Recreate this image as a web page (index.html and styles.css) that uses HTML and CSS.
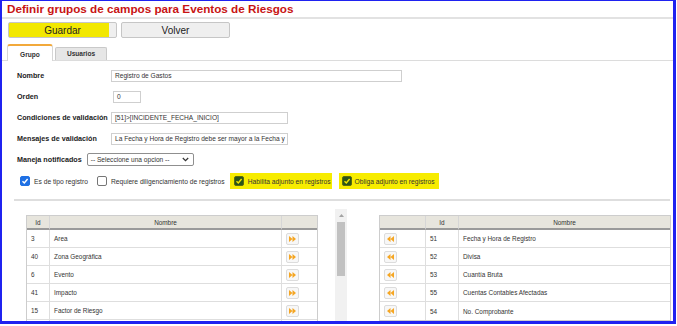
FILE: index.html
```html
<!DOCTYPE html>
<html lang="es">
<head>
    <meta charset="UTF-8">
    <title>Definir grupos de campos</title>
    <link rel="stylesheet" href="styles.css">
</head>
<body>
<div class="frame">
    <h1 class="page-title">Definir grupos de campos para Eventos de Riesgos</h1>

    <div class="toolbar">
        <button class="btn btn-save">Guardar</button>
        <button class="btn">Volver</button>
    </div>

    <div class="tabs">
        <div class="tab active">Grupo</div>
        <div class="tab">Usuarios</div>
    </div>

    <div class="form">
        <div class="row">
            <label class="lbl">Nombre</label>
            <div class="field w-nombre">Registro de Gastos</div>
        </div>
        <div class="row">
            <label class="lbl">Orden</label>
            <div class="field w-orden">0</div>
        </div>
        <div class="row">
            <label class="lbl">Condiciones de validación</label>
            <div class="field w-long">[51]&gt;[INCIDENTE_FECHA_INICIO]</div>
        </div>
        <div class="row">
            <label class="lbl">Mensajes de validación</label>
            <div class="field w-long">La Fecha y Hora de Registro debe ser mayor a la Fecha y</div>
        </div>
        <div class="row">
            <label class="lbl lbl-auto">Maneja notificados</label>
            <div class="select">
                <span>-- Seleccione una opcion --</span>
                <svg width="7" height="5" viewBox="0 0 7 5"><path d="M0.8 1 L3.5 3.7 L6.2 1" fill="none" stroke="#333" stroke-width="1.2"/></svg>
            </div>
        </div>

        <div class="checks">
            <div class="check c1">
                <span class="box on"><svg width="8" height="8" viewBox="0 0 8 8"><path d="M1.5 4.2 L3.3 6 L6.6 2" fill="none" stroke="#fff" stroke-width="1.4"/></svg></span>
                Es de tipo registro
            </div>
            <div class="check c2">
                <span class="box"></span>
                Requiere diligenciamiento de registros
            </div>
            <div class="check mark c3">
                <span class="box hl"><svg width="8" height="8" viewBox="0 0 8 8"><path d="M1.5 4.2 L3.3 6 L6.6 2" fill="none" stroke="#f2e600" stroke-width="1.4"/></svg></span>
                Habilita adjunto en registros
            </div>
            <div class="check mark c4">
                <span class="box hl"><svg width="8" height="8" viewBox="0 0 8 8"><path d="M1.5 4.2 L3.3 6 L6.6 2" fill="none" stroke="#f2e600" stroke-width="1.4"/></svg></span>
                Obliga adjunto en registros
            </div>
        </div>
    </div>

    <div class="divider"></div>

    <div class="lists">
        <table class="grid">
            <colgroup><col class="c-id"><col class="c-name"><col class="c-btn"></colgroup>
            <thead>
                <tr><th>Id</th><th>Nombre</th><th></th></tr>
            </thead>
            <tbody>
                <tr><td>3</td><td>Area</td><td><span class="mv"><svg width="7" height="6" viewBox="0 0 7 6"><path d="M0 0 L3.5 3 L0 6 Z M3.5 0 L7 3 L3.5 6 Z" fill="#f5a623"/></svg></span></td></tr>
                <tr><td>40</td><td>Zona Geográfica</td><td><span class="mv"><svg width="7" height="6" viewBox="0 0 7 6"><path d="M0 0 L3.5 3 L0 6 Z M3.5 0 L7 3 L3.5 6 Z" fill="#f5a623"/></svg></span></td></tr>
                <tr><td>6</td><td>Evento</td><td><span class="mv"><svg width="7" height="6" viewBox="0 0 7 6"><path d="M0 0 L3.5 3 L0 6 Z M3.5 0 L7 3 L3.5 6 Z" fill="#f5a623"/></svg></span></td></tr>
                <tr><td>41</td><td>Impacto</td><td><span class="mv"><svg width="7" height="6" viewBox="0 0 7 6"><path d="M0 0 L3.5 3 L0 6 Z M3.5 0 L7 3 L3.5 6 Z" fill="#f5a623"/></svg></span></td></tr>
                <tr><td>15</td><td>Factor de Riesgo</td><td><span class="mv"><svg width="7" height="6" viewBox="0 0 7 6"><path d="M0 0 L3.5 3 L0 6 Z M3.5 0 L7 3 L3.5 6 Z" fill="#f5a623"/></svg></span></td></tr>
                <tr class="cut"><td></td><td></td><td><span class="mv"><svg width="7" height="6" viewBox="0 0 7 6"><path d="M0 0 L3.5 3 L0 6 Z M3.5 0 L7 3 L3.5 6 Z" fill="#f5a623"/></svg></span></td></tr>
            </tbody>
        </table>

        <div class="scroll">
            <svg class="scroll-up" width="5" height="3" viewBox="0 0 5 3"><path d="M0 3 L2.5 0 L5 3 Z" fill="#a3a3a3"/></svg>
            <div class="thumb"></div>
        </div>

        <table class="grid right">
            <colgroup><col class="c-btn2"><col class="c-id2"><col class="c-name2"></colgroup>
            <thead>
                <tr><th></th><th>Id</th><th>Nombre</th></tr>
            </thead>
            <tbody>
                <tr><td><span class="mv"><svg width="7" height="6" viewBox="0 0 7 6"><path d="M7 0 L3.5 3 L7 6 Z M3.5 0 L0 3 L3.5 6 Z" fill="#f5a623"/></svg></span></td><td>51</td><td>Fecha y Hora de Registro</td></tr>
                <tr><td><span class="mv"><svg width="7" height="6" viewBox="0 0 7 6"><path d="M7 0 L3.5 3 L7 6 Z M3.5 0 L0 3 L3.5 6 Z" fill="#f5a623"/></svg></span></td><td>52</td><td>Divisa</td></tr>
                <tr><td><span class="mv"><svg width="7" height="6" viewBox="0 0 7 6"><path d="M7 0 L3.5 3 L7 6 Z M3.5 0 L0 3 L3.5 6 Z" fill="#f5a623"/></svg></span></td><td>53</td><td>Cuantía Bruta</td></tr>
                <tr><td><span class="mv"><svg width="7" height="6" viewBox="0 0 7 6"><path d="M7 0 L3.5 3 L7 6 Z M3.5 0 L0 3 L3.5 6 Z" fill="#f5a623"/></svg></span></td><td>55</td><td>Cuentas Contables Afectadas</td></tr>
                <tr><td><span class="mv"><svg width="7" height="6" viewBox="0 0 7 6"><path d="M7 0 L3.5 3 L7 6 Z M3.5 0 L0 3 L3.5 6 Z" fill="#f5a623"/></svg></span></td><td>54</td><td>No. Comprobante</td></tr>
            </tbody>
        </table>
    </div>
</div>
</body>
</html>
```

FILE: styles.css
```css
* {
    box-sizing: border-box;
}

body {
    margin: 0;
    font-family: "Liberation Sans", Arial, sans-serif;
    color: #222;
    background: #fff;
}

.frame {
    width: 676px;
    height: 324px;
    border: 2px solid #1f22f0;
    border-top-width: 1px;
    border-right-width: 3px;
    border-bottom-width: 3px;
    overflow: hidden;
}

.page-title {
    margin: 0;
    padding: 0 5px;
    height: 18px;
    line-height: 16px;
    font-size: 11.7px;
    font-weight: bold;
    color: #c81414;
    border-bottom: 2px solid #e2e2e2;
}

/* botones */
.toolbar {
    display: flex;
    gap: 4px;
    padding: 3px 6px 0;
}

.btn {
    width: 109px;
    height: 16px;
    padding: 0;
    border: 1px solid #c6c6c6;
    border-radius: 2px;
    background: #efefef;
    font: 10px "Liberation Sans", Arial, sans-serif;
    color: #222;
}

.btn-save {
    background: linear-gradient(to right, #f2e800 93%, #efefef 93%);
}

/* pestañas */
.tabs {
    display: flex;
    align-items: flex-end;
    height: 17px;
    margin-top: 6px;
    padding-left: 5px;
    border-bottom: 1px solid #dcdcdc;
}

.tab {
    width: 52px;
    height: 13px;
    margin-left: 2px;
    background: #e6e6e6;
    border: 1px solid #c9c9c9;
    border-bottom: none;
    border-radius: 2px 2px 0 0;
    font-size: 6.6px;
    font-weight: bold;
    line-height: 12px;
    text-align: center;
    color: #333;
}

.tab.active {
    width: 46px;
    height: auto;
    margin: 0 0 -1px;
    padding-top: 2px;
    line-height: 13px;
    background: #fff;
    border-color: #d6d6d6;
    border-top: 2px solid #f2a93b;
    border-radius: 3px 3px 0 0;
}

/* formulario */
.form {
    padding: 4px 0 0 15px;
}

.row {
    display: flex;
    align-items: center;
    height: 21px;
}

.lbl {
    width: 94px;
    font-size: 7.2px;
    font-weight: bold;
    color: #222;
}

.lbl-auto {
    width: auto;
    margin-right: 5px;
}

.field {
    height: 12px;
    padding: 0 3px;
    border: 1px solid #cfcfcf;
    font-size: 6.6px;
    line-height: 10px;
    color: #333;
    white-space: nowrap;
    overflow: hidden;
}

.w-nombre {
    width: 291px;
}

.w-orden {
    width: 28px;
    margin-left: 2px;
}

.w-long {
    width: 177px;
}

.select {
    display: flex;
    align-items: center;
    justify-content: space-between;
    width: 107px;
    height: 13px;
    padding: 0 4px 0 3px;
    border: 1px solid #8f8f8f;
    border-radius: 2px;
    font-size: 6.6px;
    color: #333;
}

/* casillas */
.checks {
    display: flex;
    align-items: center;
    height: 16px;
    margin: 3px 0 0 3px;
}

.check {
    display: flex;
    align-items: center;
    gap: 4px;
    height: 16px;
    font-size: 6.7px;
    color: #333;
}

.c1 {
    margin-right: 9px;
}

.c2 {
    margin-right: 5px;
}

.mark {
    background: #f7ec00;
}

.c3 {
    padding: 0 1px 0 4px;
    margin-right: 7px;
}

.c4 {
    padding: 0 4px 0 3px;
    gap: 3px;
}

.box {
    display: flex;
    align-items: center;
    justify-content: center;
    width: 10px;
    height: 10px;
    border: 1px solid #767676;
    border-radius: 2px;
    background: #fff;
}

.box.on {
    background: #1f70e4;
    border-color: #1f70e4;
}

.box.hl {
    background: #2a5418;
    border-color: #5a6a10;
}

.divider {
    margin: 10px 3px 0 12px;
    border-top: 2px solid #dedede;
}

/* listas */
.lists {
    display: flex;
    align-items: flex-start;
    padding-left: 24px;
}

.grid {
    width: 292px;
    margin-top: 14px;
    table-layout: fixed;
    border-collapse: separate;
    border-spacing: 0;
    border: 1px solid #cdcdcd;
    font-size: 6.4px;
    color: #333;
}

.c-id { width: 23px; }
.c-name { width: 232px; }
.c-btn { width: 35px; }
.c-btn2 { width: 46px; }
.c-id2 { width: 33px; }
.c-name2 { width: 211px; }

.grid th {
    height: 14px;
    padding: 0;
    background: #e7e5dd;
    border-bottom: 2px solid #9a9a9a;
    border-right: 1px solid #d6d6d6;
    font-weight: normal;
    text-align: center;
}

.grid td {
    height: 18px;
    padding: 0 0 0 4px;
    border-bottom: 1px solid #dedede;
    border-right: 1px solid #dedede;
    text-align: left;
}

.grid th:last-child,
.grid td:last-child {
    border-right: none;
}

.grid tr:last-child td {
    border-bottom: none;
}

.mv {
    display: flex;
    align-items: center;
    justify-content: center;
    width: 13px;
    height: 12px;
    border: 1px solid #dcdcdc;
    border-radius: 2px;
    background: #f7f7f7;
}

.scroll {
    display: flex;
    flex-direction: column;
    align-items: center;
    width: 12px;
    height: 140px;
    margin: 8px 32px 0 17px;
    padding-top: 5px;
    background: #f1f1f1;
}

.thumb {
    width: 8px;
    height: 54px;
    margin-top: 5px;
    background: #c1c1c1;
}
```
